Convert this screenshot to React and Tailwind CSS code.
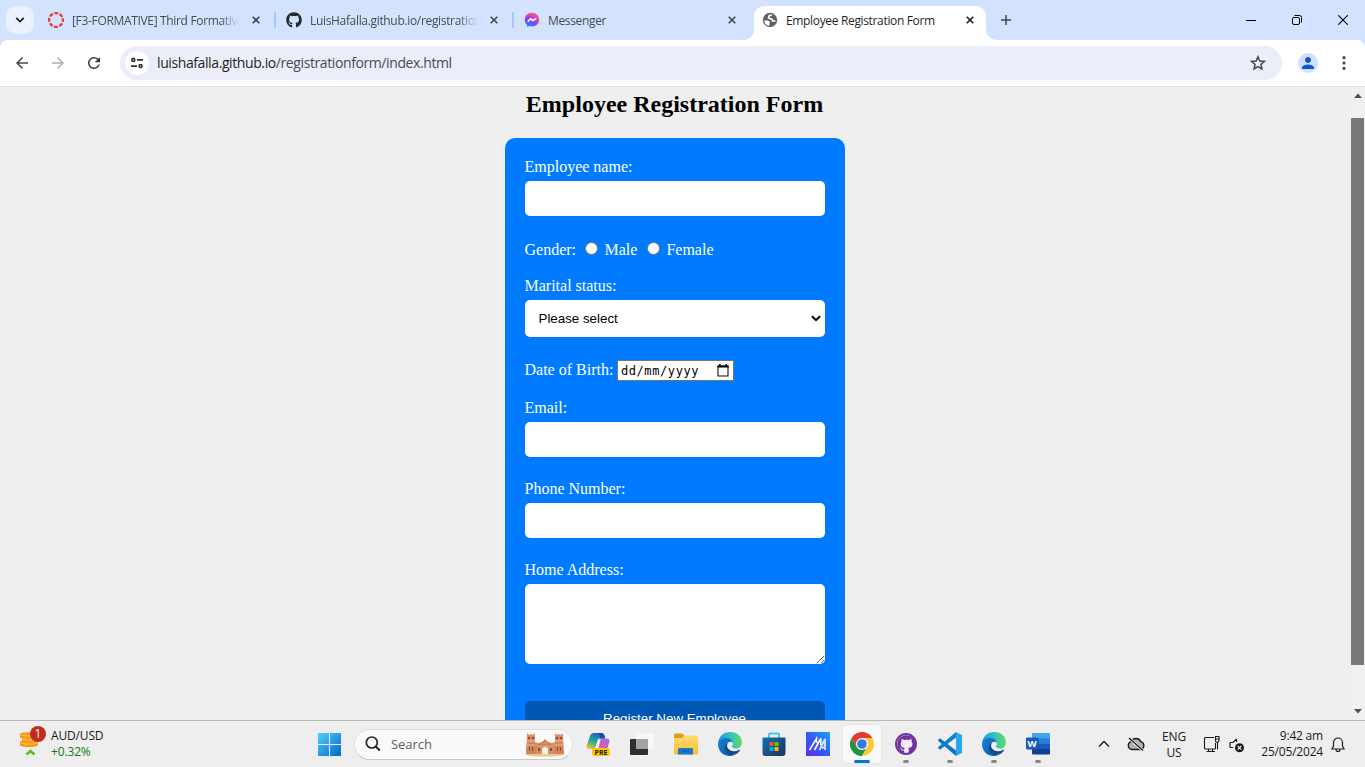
import React from "react";
import { FaGithub } from "react-icons/fa";
import { MdArrowBack, MdArrowForward, MdRefresh, MdPerson } from "react-icons/md";

const UI = "font-['Open_Sans','Noto_Sans',sans-serif]";

function CloseIcon({ className }) {
  return (
    <svg viewBox="0 0 8 8" className={"h-2 w-2 shrink-0 " + className}>
      <path d="M0.7 0.7 L7.3 7.3 M7.3 0.7 L0.7 7.3" stroke="currentColor" strokeWidth="1.6" />
    </svg>
  );
}

function CanvasLogo() {
  return (
    <svg viewBox="0 0 16 16" className="h-4 w-4 shrink-0">
      <circle cx="8" cy="8" r="6.9" fill="none" stroke="#e63f33" strokeWidth="2.3" strokeDasharray="3.9 1.519" strokeDashoffset="1.95" />
    </svg>
  );
}

function MessengerLogo() {
  return (
    <svg viewBox="0 0 16 16" className="h-4 w-4 shrink-0">
      <defs>
        <radialGradient id="msgr" cx="0.2" cy="1" r="1.15">
          <stop offset="0" stopColor="#0a8bff" />
          <stop offset="0.5" stopColor="#8a3cff" />
          <stop offset="0.8" stopColor="#e8489a" />
          <stop offset="1" stopColor="#ff6a6a" />
        </radialGradient>
      </defs>
      <path d="M8 .8C3.800.8.8 3.800.8 7.700c0 2.100.9 3.900 2.300 5.100v2.100l2.200-1c.8.3 1.700.5 2.700.5 4.200 0 7.200-3 7.200-6.800S12.200.8 8 .8Z" fill="url(#msgr)" />
      <path d="M3.700 9.700 6.600 6.700 9 8.600 12.300 6.300" fill="none" stroke="#fff" strokeWidth="1.6" strokeLinejoin="round" />
    </svg>
  );
}

function Globe() {
  return (
    <svg viewBox="0 0 16 16" className="h-4 w-4 shrink-0">
      <circle cx="8" cy="8" r="7.200" fill="#5f6368" />
      <path d="M10 3 7.200 3.800 6.600 6 9.800 7.200 10.600 9H13.400" fill="none" stroke="#fff" strokeWidth="1.700" />
      <path d="M2.100 8.400H6L8 10 7.400 11.300V13.700C4.500 13.500 2.300 11.400 2.100 8.400Z" fill="#fff" />
    </svg>
  );
}

function Tab({ icon, title, sep, width }) {
  return (
    <div className={"flex h-10 shrink-0 items-center pl-[10px] " + width}>
      {icon}
      <div className="ml-2 w-[168px] overflow-hidden pt-px text-[12px] leading-4 tracking-[-0.33px] whitespace-nowrap text-[#474b52] [mask-image:linear-gradient(to_right,black_88%,transparent)]">{title}</div>
      <CloseIcon className="ml-[12px] text-[#44474b]" />
      {sep && <div className="ml-auto h-4 w-[2px] bg-[#a8c7fa]" />}
    </div>
  );
}

function TabStrip() {
  return (
    <div className="flex h-10 shrink-0 bg-[#d3e3fd]">
      <div className="mt-[6px] ml-[6px] flex h-7 w-7 items-center justify-center rounded-[10px] bg-[#ebf1fe]">
        <svg viewBox="0 0 10 6" className="h-[6px] w-[10px]"><path d="M1.200.8 5 4.600 8.800.8" fill="none" stroke="#1f1f1f" strokeWidth="1.800" /></svg>
      </div>
      <div className="ml-1 flex">
        <Tab width="w-[238px]" sep icon={<CanvasLogo />} title="[F3-FORMATIVE] Third Formative" />
        <Tab width="w-[238px]" sep icon={<FaGithub className="h-4 w-4 shrink-0 text-[#24292f]" />} title="LuisHafalla.github.io/registrationform" />
        <div className="flex h-10 w-[240px] items-center pl-[10px]">
          <MessengerLogo />
          <div className="ml-2 w-[180px] pt-px text-[12px] leading-4 tracking-[-0.35px] text-[#474b52]">Messenger</div>
          <CloseIcon className="text-[#44474b]" />
        </div>
      </div>
      <div className="relative mt-[6px] flex h-[34px] w-[232px] items-center rounded-t-[10px] bg-white pb-[6px] pl-2">
        <svg viewBox="0 0 10 10" className="absolute bottom-0 -left-[10px] h-[10px] w-[10px]"><path d="M10 0v10H0A10 10 0 0 0 10 0Z" fill="#fff" /></svg>
        <svg viewBox="0 0 10 10" className="absolute -right-[10px] bottom-0 h-[10px] w-[10px]"><path d="M0 0v10h10A10 10 0 0 1 0 0Z" fill="#fff" /></svg>
        <Globe />
        <div className="ml-2 w-[180px] pt-px text-[12px] leading-4 tracking-[-0.34px] whitespace-nowrap text-[#1f1f1f]">Employee Registration Form</div>
        <CloseIcon className="text-[#1f1f1f]" />
      </div>
      <svg viewBox="0 0 10 10" className="mt-[15px] ml-[15px] h-[10px] w-[10px]"><path d="M5 0v10M0 5h10" stroke="#44474b" strokeWidth="1.500" /></svg>
      <div className="mr-[17px] ml-auto flex h-10 items-center text-black">
        <svg viewBox="0 0 10 10" className="h-[10px] w-[10px]"><path d="M0 5.500h10" stroke="currentColor" /></svg>
        <svg viewBox="0 0 10 10" className="ml-[36px] h-[10px] w-[10px]" fill="none" stroke="currentColor"><rect x=".5" y="2.500" width="7" height="7" rx="1.500" /><path d="M2.500.5h5a2 2 0 0 1 2 2v5" /></svg>
        <svg viewBox="0 0 10 10" className="ml-[36px] h-[10px] w-[10px]"><path d="M.3.3 9.700 9.700M9.700.3.3 9.700" stroke="currentColor" strokeWidth="1.100" /></svg>
      </div>
    </div>
  );
}

function Toolbar() {
  return (
    <div className="h-[47px] shrink-0 bg-[#d3e3fd]">
      <div className="flex h-[47px] items-center rounded-t-[8px] border-b border-[#dfe1e2] bg-white">
        <MdArrowBack className="ml-[13px] h-[18px] w-[18px] text-[#44474b]" />
        <MdArrowForward className="ml-[18px] h-[18px] w-[18px] text-[#adafb1]" />
        <MdRefresh className="ml-[18px] h-[18px] w-[18px] text-[#3c3f43]" />
        <div className="ml-[17px] flex h-[34px] w-[1162px] items-center rounded-full bg-[#ebeef8] pl-[5px]">
          <div className="flex h-6 w-6 items-center justify-center rounded-full bg-white">
            <svg viewBox="0 0 12 12" className="h-3 w-3" fill="none" stroke="#303236" strokeWidth="1.600"><circle cx="2.300" cy="2.900" r="1.500" /><path d="M6 2.900h6M0 9.100h6" /><circle cx="9.600" cy="9.100" r="1.500" /></svg>
          </div>
          <div className="ml-2 text-[14px] leading-5 tracking-[-0.4px] whitespace-nowrap text-[#474b52]"><span className="text-[#1f1f1f]">luishafalla.github.io</span>/registrationform/index.html</div>
          <svg viewBox="0 0 16 16" className="mr-4 mb-px ml-auto h-4 w-4"><path d="M8 1.700 9.800 6 14.500 6.400 10.900 9.500 12 14 8 11.600 4 14 5.100 9.500 1.500 6.400 6.200 6Z" fill="none" stroke="#44474b" strokeWidth="1.500" /></svg>
        </div>
        <div className="ml-4 flex h-5 w-5 items-center justify-center rounded-full bg-[#cfe0fc]"><MdPerson className="h-[18px] w-[18px] text-[#0b57d0]" /></div>
        <svg viewBox="0 0 4 14" className="ml-[24px] h-[14px] w-1" fill="#44474b"><circle cx="2" cy="1.700" r="1.600" /><circle cx="2" cy="7" r="1.600" /><circle cx="2" cy="12.300" r="1.600" /></svg>
      </div>
    </div>
  );
}

function Label({ children, className = "" }) {
  return <label className={"-ml-[0.5px] block h-[18px] text-[16px] leading-[18px] " + className}>{children}</label>;
}

const FIELD = "mt-[5px] block w-full rounded-[5px] bg-white ";

function FormPage() {
  return (
    <div className="flex min-h-0 flex-1 bg-[#efefef]">
      <div className="flex w-[1350px] flex-col items-center overflow-hidden font-['Liberation_Serif',serif]">
        <h2 className="mt-1 mr-px h-[27px] text-[24px] leading-[27px] font-bold text-black">Employee Registration Form</h2>
        <form className="mt-5 h-[700px] w-[340px] shrink-0 rounded-[10px] bg-[#007bff] p-5 text-white">
          <Label>Employee name:</Label>
          <input className={FIELD + "h-[35px]"} />
          <div className="mt-[25px] -ml-[0.5px] flex h-[18px] items-center text-[16px] leading-[18px]">
            <span>Gender:</span>
            <span className="mb-[3px] ml-[8.500px] h-[13px] w-[13px] rounded-full border border-[#767676] bg-white" />
            <span className="ml-[7px]">Male</span>
            <span className="mb-[3px] ml-[9.500px] h-[13px] w-[13px] rounded-full border border-[#767676] bg-white" />
            <span className="ml-[6.500px]">Female</span>
          </div>
          <Label className="mt-[18px]">Marital status:</Label>
          <div className={FIELD + "font-['Liberation_Sans',sans-serif]"}>
            <div className="flex h-[37px] items-center pl-[13.500px] text-[13.333px] text-black">
              Please select
              <svg viewBox="0 0 10 7" className="mr-1 ml-auto h-[7px] w-[10px]"><path d="M1 1.200 5 5.200 9 1.200" fill="none" stroke="#000" strokeWidth="2" /></svg>
            </div>
          </div>
          <div className="mt-[23px] -ml-[0.5px] flex h-[21px] items-center text-[16px] leading-[18px]">
            <span className="mb-[2px]">Date of Birth:</span>
            <div className="ml-[3.500px] flex h-[21px] w-[117px] items-center border border-[#767676] bg-white pr-[4px] pl-[3px] font-['DejaVu_Sans_Mono',monospace] text-[12px] tracking-[0.600px] text-black">
              dd/mm/yyyy
              <svg viewBox="0 0 12 13" className="ml-auto h-[13px] w-3"><path d="M1 2h10v10H1Z" fill="none" stroke="#111" strokeWidth="1.100" /><path d="M.5 1.500h11v2H.5ZM2 0h1.500v2H2ZM8.500 0H10v2H8.500Z" /></svg>
            </div>
          </div>
          <Label className="mt-[18px]">Email:</Label>
          <input className={FIELD + "h-[35px]"} />
          <Label className="mt-[23px]">Phone Number:</Label>
          <input className={FIELD + "h-[35px]"} />
          <Label className="mt-[23px]">Home Address:</Label>
          <textarea className={FIELD + "h-[80px] resize"} />
          <button type="button" className="mt-[37px] flex h-[35px] w-full items-center justify-center rounded-[5px] bg-[#0056b3] pr-px font-['Liberation_Sans',sans-serif] text-[13.333px] leading-4 text-white">Register New Employee</button>
        </form>
      </div>
      <div className="flex w-[15px] flex-col items-center bg-[#f0f0f0]">
        <svg viewBox="0 0 8 5" className="mt-[6px] h-[5px] w-2"><path d="M0 5 4 .5 8 5Z" fill="#505050" /></svg>
        <div className="mt-[20px] h-[547px] w-[13px] bg-[#787878]" />
        <svg viewBox="0 0 8 5" className="mt-[44px] h-[5px] w-2"><path d="M0 0 4 4.500 8 0Z" fill="#505050" /></svg>
      </div>
    </div>
  );
}

function Castle() {
  return (
    <svg viewBox="0 0 40 25" className="h-[25px] w-10">
      <ellipse cx="20" cy="22.500" rx="19.500" ry="2" fill="#edc78b" />
      <path d="M1 22 2 5V1l2 2 2-1 2 1 2-2v9l3 1 4-1 3-3 3 3 4 1 3-1V1l2 2 2-1 2 1 2-2v4l1 17Z" fill="#d98c63" />
      <path d="M1 22 2 11h8l1 11ZM30 22V11h7l2 11ZM13 12h14v3H13Z" fill="#d1835c" />
      <path d="M2 9h8M30 9h8M2 13h8M30 13h8M12 14h16" stroke="#eeb184" />
      <path d="M3 5h2v2H3ZM7 5h2v2H7ZM31 5h2v2h-2ZM35 5h2v2h-2ZM4 15h1v4H4ZM7 15h1v4H7ZM32 15h1v4h-1ZM35 15h1v4h-1ZM13 16h2v3h-2ZM25 16h2v3h-2Z" fill="#8a4c38" />
      <path d="M17 22v-4a3 3 0 0 1 6 0v4Z" fill="#fff7e9" />
      <path d="M14 14l3-3 3-3 3 3 3 3" fill="none" stroke="#c47850" />
    </svg>
  );
}

function Copilot() {
  return (
    <svg viewBox="0 0 24 24" className="h-6 w-6">
      <defs>
        <linearGradient id="cpa" x1="0.600" y1="0" x2="0.200" y2="1"><stop stopColor="#1f5ecb" /><stop offset=".5" stopColor="#20a69a" /><stop offset="1" stopColor="#f5c52c" /></linearGradient>
        <linearGradient id="cpb" x1="0.700" y1="0" x2="0.300" y2="1"><stop stopColor="#9c6ff0" /><stop offset=".55" stopColor="#e05aad" /><stop offset="1" stopColor="#ff7b5a" /></linearGradient>
      </defs>
      <path d="M8 1h7c2 0 3 1 3.500 3l.7 2.500H14c-1.500 0-2.200.8-2.700 2.500l-1.500 5C9 16.500 8 17 6 17H3c-2.200 0-3-1.300-2.300-3.500L4 4C4.800 2 6 1 8 1Z" fill="url(#cpa)" />
      <path d="M13 1h2c2 0 3 1 3.500 3l.7 2.500H14Z" fill="#1948a8" />
      <path d="M15 6.500h5.500c2.300 0 3.500 1.500 2.800 3.500L21 17.500C20.300 20 19 21 17 21H9c2 0 2.500-1.200 3-3l2-8c.4-2 .2-2.800 1-3.500Z" fill="url(#cpb)" />
      <rect x="6" y="16" width="18" height="8" rx="2" fill="#fdc900" />
      <text x="15" y="22.500" textAnchor="middle" fontSize="7" fontWeight="700" fontFamily="Open Sans, sans-serif" fill="#222">PRE</text>
    </svg>
  );
}

function TaskView() {
  return (
    <svg viewBox="0 0 24 24" className="h-6 w-6">
      <rect x="0" y="7" width="18" height="16" rx="1" fill="#30302f" />
      <rect x="6" y="1" width="18" height="16" rx="1" fill="#f7f7f7" />
      <path d="M6 7h12v10H7a1 1 0 0 1-1-1Z" fill="#a3a3a3" />
    </svg>
  );
}

function Folder() {
  return (
    <svg viewBox="0 0 24 24" className="h-6 w-6">
      <defs><linearGradient id="fold" x1="0" y1="0" x2="0" y2="1"><stop stopColor="#ffdc6e" /><stop offset="1" stopColor="#fbbd36" /></linearGradient></defs>
      <path d="M0 3A1.500 1.500 0 0 1 1.500 1.500H8L10.500 4H22v4H0Z" fill="#dc9c17" />
      <path d="M0 6h8l2.500-2.500H22.500A1.500 1.500 0 0 1 24 5v16a1.500 1.500 0 0 1-1.500 1.500h-21A1.500 1.500 0 0 1 0 21Z" fill="url(#fold)" />
      <path d="M4 22.500v-5A1.500 1.500 0 0 1 5.500 16h12a1.500 1.500 0 0 1 1.500 1.500v5Z" fill="#1879c9" />
      <path d="M8 19h7" stroke="#0b5aa5" strokeWidth="1.200" />
    </svg>
  );
}

function Edge({ id }) {
  return (
    <svg viewBox="0 0 24 24" className="h-6 w-6">
      <defs>
        <linearGradient id={id + "a"} x1="0" y1=".5" x2="1" y2=".4"><stop stopColor="#1b91db" /><stop offset=".5" stopColor="#30bfc7" /><stop offset="1" stopColor="#67dd5c" /></linearGradient>
        <linearGradient id={id + "b"} x1="0" y1="0" x2="1" y2="1"><stop stopColor="#1684d5" /><stop offset="1" stopColor="#0b55a8" /></linearGradient>
      </defs>
      <path d="M.1 11C.8 4.500 5.700 0 12 0c7 0 12 4.600 12 10.200 0 3.800-2.600 6.300-6 6.300-2.500 0-4.200-.8-4.200-1.900 0-.8 1.100-1.100 1.100-2.900C14.900 9 12.500 7 9 7 5 7 1.500 8.500.1 11Z" fill={"url(#" + id + "a)"} />
      <path d="M.1 11C1 8 4.500 5.800 8.500 6c3.700.2 6.200 2.400 6.400 5.200-1-1.300-2.300-1.700-3.800-1.300-3 1-4.300 4-3.300 7.200 1 3.500 4.500 5.700 8 5.800-1.200.7-2.400 1.100-3.800 1.100C4.500 24 0 18.500 0 12Z" fill={"url(#" + id + "b)"} />
      <path d="M10.500 10.200c-2 1.800-2 5 .2 7.100 2.300 2.300 6.300 2.700 10.300.7.800-.4 1.200.2.8.8-1.900 3-5.600 4.700-8.300 4.300-4.500-.6-7.300-4.300-6.700-8 .4-2.400 1.700-4.200 3.700-4.900Z" fill="#134b87" />
    </svg>
  );
}

function Store() {
  return (
    <svg viewBox="0 0 24 24" className="h-6 w-6">
      <defs><linearGradient id="store" x1="0" y1="0" x2="1" y2="1"><stop stopColor="#0f70b7" /><stop offset="1" stopColor="#1d3457" /></linearGradient></defs>
      <path d="M7 6V2.500A1 1 0 0 1 8 1.500h8a1 1 0 0 1 1 1V6" fill="none" stroke="#45bdf0" strokeWidth="1.800" />
      <path d="M.5 5.500h23v15.500a3 3 0 0 1-3 3h-17a3 3 0 0 1-3-3Z" fill="url(#store)" />
      <path d="M7.500 10h4v4h-4Z" fill="#f25022" /><path d="M12.500 10h4v4h-4Z" fill="#7fba00" /><path d="M7.500 15h4v4h-4Z" fill="#00a4ef" /><path d="M12.500 15h4v4h-4Z" fill="#ffb900" />
    </svg>
  );
}

function MyAsus() {
  return (
    <svg viewBox="0 0 24 24" className="h-6 w-6">
      <defs><linearGradient id="asus" x1="0" y1="1" x2="1" y2="0"><stop stopColor="#6428ef" /><stop offset=".5" stopColor="#315dfa" /><stop offset="1" stopColor="#16a3ff" /></linearGradient></defs>
      <path d="M0 0h24v24H0Z" fill="url(#asus)" />
      <path d="M3.500 18 10.500 6.500V11M8.500 18 14.800 6.500V13" fill="none" stroke="#fff" strokeWidth="1.600" />
      <path d="M13.500 18 19 7V18M16 15.500H19" fill="none" stroke="#dce9ff" strokeWidth="1.800" />
    </svg>
  );
}

function Chrome() {
  return (
    <svg viewBox="0 0 24 24" className="h-6 w-6">
      <path d="M1.600 6A12 12 0 0 1 22.400 6H12L6.800 15Z" fill="#e33b2e" />
      <path d="M12 24A12 12 0 0 1 1.600 6L6.800 15H17.200Z" fill="#229342" />
      <path d="M17.200 15 12 24h.1A12 12 0 0 0 22.400 6H12Z" fill="#fcc934" />
      <circle cx="12" cy="12" r="6" fill="#fff" /><circle cx="12" cy="12" r="4.800" fill="#347bea" />
    </svg>
  );
}

function VSCode() {
  return (
    <svg viewBox="0 0 24 24" className="h-6 w-6">
      <path d="M0 8 2 6.300 18 18.500V24L.3 9Z" fill="#1474b5" />
      <path d="M0 16l2 1.700L18 5.500V0L.3 15Z" fill="#0c81c8" />
      <path d="M18 0l5 2.400c.7.300 1 .8 1 1.500v16.200c0 .7-.3 1.200-1 1.500L18 24Z" fill="#29a5ed" />
    </svg>
  );
}

function Word() {
  return (
    <svg viewBox="0 0 24 24" className="h-6 w-6">
      <path d="M7 1h16a1 1 0 0 1 1 1v5H6V2a1 1 0 0 1 1-1Z" fill="#41a5ee" /><path d="M6 6.500h18V12H6Z" fill="#2b7cd3" /><path d="M6 12h18v5.500H6Z" fill="#185abd" /><path d="M6 17h18v4.500a1 1 0 0 1-1 1H7a1 1 0 0 1-1-1Z" fill="#103f91" />
      <path d="M6 6h6a1 1 0 0 1 1 1v11H6Z" fill="#103f91" opacity=".5" />
      <rect x="0" y="5.500" width="12" height="12" rx="1" fill="#185abd" />
      <text x="6" y="15" textAnchor="middle" fontSize="9.500" fontWeight="700" fontFamily="Open Sans, sans-serif" fill="#fff">W</text>
    </svg>
  );
}

function TaskbarApp({ children, state }) {
  return (
    <div className={"flex h-[38px] w-[38px] flex-col items-center rounded-[4px] pt-[7px] " + (state === "active" ? "bg-[#f9f9f9] shadow-[0_0_1px_#bbb]" : "")}>
      {children}
      {state === "active" && <div className="mt-1 h-[3px] w-4 shrink-0 rounded-full bg-[#0078d4]" />}
      {state === "open" && <div className="mt-1 h-[3px] w-[6px] shrink-0 rounded-full bg-[#878787]" />}
    </div>
  );
}

function Taskbar() {
  return (
    <div className="flex h-[47px] shrink-0 items-start border-t border-[#b9b9b9] bg-[#eeeeee] text-[#1b1b1b]">
      <div className="flex w-[318px] pt-[5px] pl-[19px]">
        <svg viewBox="0 0 28 30" className="h-[30px] w-7">
          <path d="M1 8c0-2.200 17-2.200 17 0v4H1ZM3 12h16v4H3ZM1 15h18v4c0 2.700-18 2.700-18 0Z" fill="#f29a20" />
          <path d="M1 8c0 2.300 17 2.300 17 0M3 12.500c3 2 13 2 16 0M1 16c2 2.500 16 2.500 18 0" fill="none" stroke="#ffb83f" strokeWidth="1.400" />
          <path d="M7.500 28.500 11.500 25l4 3.500" fill="none" stroke="#62bc13" strokeWidth="2.600" />
          <circle cx="19" cy="8" r="8" fill="#c42b1c" />
          <text x="19" y="12.300" textAnchor="middle" fontSize="12" fontFamily="Open Sans, sans-serif" fill="#fff">1</text>
        </svg>
        <div className="ml-1 pt-[2px] text-[12px] leading-4 tracking-[-0.15px]"><div>AUD/USD</div><div className="text-[#157a15]">+0.32%</div></div>
      </div>
      <svg viewBox="0 0 23 23" className="mt-3 h-[23px] w-[23px]">
        <defs><linearGradient id="win" x1="0" y1="0" x2="1" y2="1"><stop stopColor="#4fd0fb" /><stop offset="1" stopColor="#0067c9" /></linearGradient></defs>
        <path d="M0 0h11v11H0ZM12 0h11v11H12ZM0 12h11v11H0ZM12 12h11v11H12Z" fill="url(#win)" />
      </svg>
      <div className="mt-2 ml-[13px] flex h-[31px] w-[219px] items-center rounded-full border border-[#e0e0e0] border-b-[#c9c9c9] bg-[#fafafa] pr-[7px] pb-px pl-[10px]">
        <svg viewBox="0 0 16 16" className="h-4 w-4" fill="none" stroke="#252525"><circle cx="6.800" cy="6.500" r="5.500" strokeWidth="1.700" /><path d="m10.800 10.500 4 4" strokeWidth="2" /></svg>
        <span className="ml-[10px] text-[13px] leading-4 tracking-[-0.05px] text-[#5c5c5c]">Search</span>
        <div className="ml-auto"><Castle /></div>
      </div>
      <div className="mt-1 ml-[6px] flex gap-[6px]">
        <TaskbarApp><Copilot /></TaskbarApp>
        <TaskbarApp><TaskView /></TaskbarApp>
        <TaskbarApp><Folder /></TaskbarApp>
        <TaskbarApp><Edge id="e1" /></TaskbarApp>
        <TaskbarApp><Store /></TaskbarApp>
        <TaskbarApp><MyAsus /></TaskbarApp>
        <TaskbarApp state="active"><Chrome /></TaskbarApp>
        <TaskbarApp state="open">
          <div className="flex h-6 w-6 items-center justify-center">
            <div className="flex h-[22px] w-[22px] items-center justify-center rounded-full border-2 border-[#71349b] bg-[#f3e9f9]"><FaGithub className="h-[19px] w-[19px] shrink-0 text-[#71349b]" /></div>
          </div>
        </TaskbarApp>
        <TaskbarApp state="open"><VSCode /></TaskbarApp>
        <TaskbarApp state="open"><Edge id="e2" /></TaskbarApp>
        <TaskbarApp state="open"><Word /></TaskbarApp>
      </div>
      <div className="mr-[20px] ml-auto flex h-[46px] items-center text-[12px] leading-4">
        <svg viewBox="0 0 12 8" className="h-2 w-3"><path d="m1 6.500 5-5 5 5" fill="none" stroke="#1b1b1b" strokeWidth="1.300" /></svg>
        <svg viewBox="0 0 18 14" className="ml-[17px] h-[14px] w-[18px]"><path d="M5 12.500a4 4 0 0 1-.5-7.900 5 5 0 0 1 9.200 0 4 4 0 0 1-.7 7.900Z" fill="#b0b0b0" stroke="#1b1b1b" strokeWidth="1.400" /><path d="m2 1 14 12.500" stroke="#eee" strokeWidth="3" /><path d="m2 1 14 12.500" stroke="#1b1b1b" strokeWidth="1.300" /></svg>
        <div className="ml-[14px] w-[30px] pt-[2px] text-center tracking-[-0.2px]"><div>ENG</div><div>US</div></div>
        <svg viewBox="0 0 17 18" className="ml-[14px] h-[18px] w-[17px]" fill="none" stroke="#1b1b1b" strokeWidth="1.100"><path d="M11 2.500H2.500A1 1 0 0 0 1.500 3.500v9.500a1 1 0 0 0 1 1h9a1 1 0 0 0 1-1V8M5.500 14v2.500M9.500 14v2.500M3.500 16.500H12" /><path d="M12.500 1.500h3.500v4a1.700 1.700 0 0 1-3.500 0ZM12.500 4H16M14.500 7.500V14.500" /></svg>
        <svg viewBox="0 0 16 15" className="mt-[3px] ml-[9px] h-[15px] w-4"><path d="M7.500 1v3M7.500 1 4 4.500H1.500a.5.500 0 0 0-.5.500v4a.5.500 0 0 0 .5.500H4" fill="none" stroke="#1b1b1b" strokeWidth="1.200" /><circle cx="10.500" cy="9.800" r="4.500" fill="#1b1b1b" /><path d="m8.700 8 3.600 3.600m0-3.600-3.600 3.600" stroke="#eee" strokeWidth="1.200" /></svg>
        <div className="ml-[13px] w-[65px] text-right tracking-[-0.2px] whitespace-nowrap"><div>9:42 am</div><div>25/05/2024</div></div>
        <svg viewBox="0 0 14 15" className="ml-2 h-[15px] w-[14px]" fill="none" stroke="#1b1b1b" strokeWidth="1.200"><path d="M2.500 9V5.500a4.500 4.500 0 0 1 9 0V9l1.500 3H1ZM5 12.500a2 2 0 0 0 4 0" /></svg>
      </div>
    </div>
  );
}

export default function App() {
  return (
    <div className={"flex h-[767px] w-[1365px] flex-col overflow-hidden " + UI}>
      <TabStrip />
      <Toolbar />
      <FormPage />
      <Taskbar />
    </div>
  );
}
